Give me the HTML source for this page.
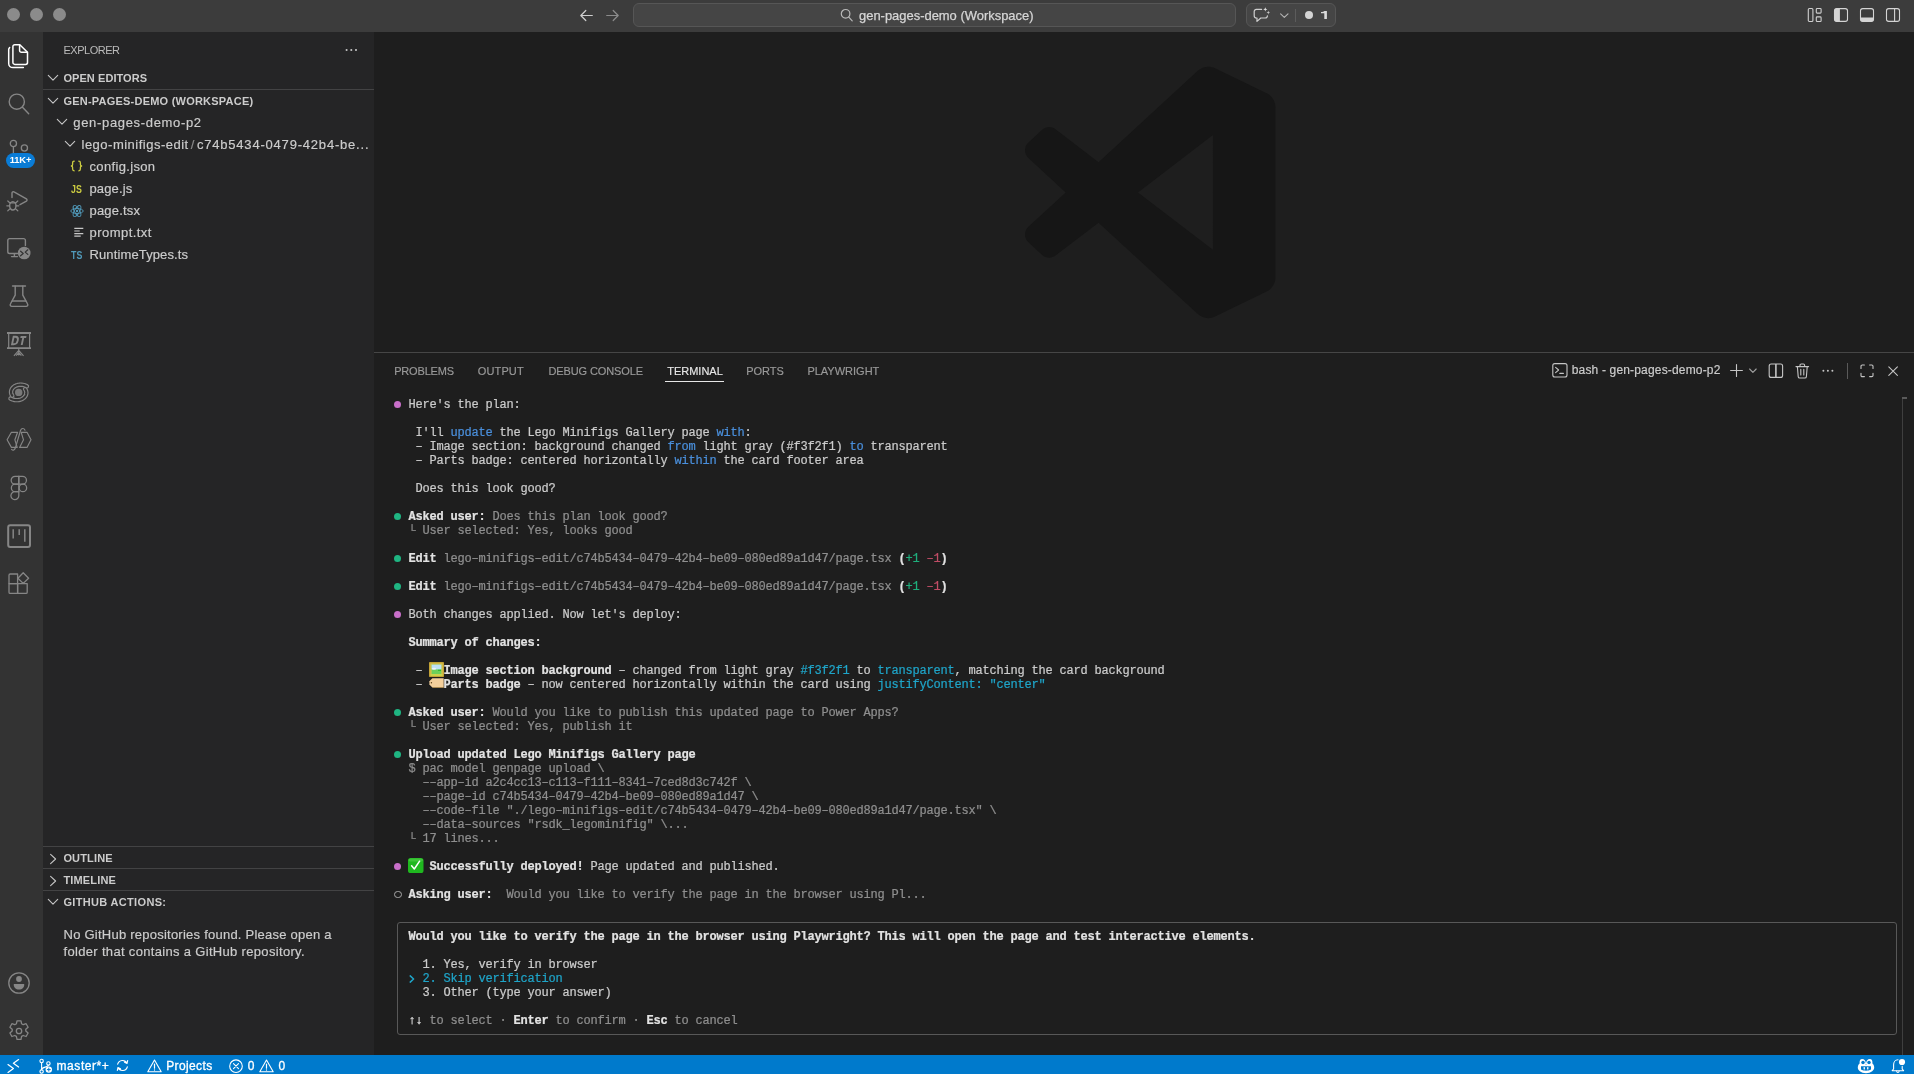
<!DOCTYPE html>
<html>
<head>
<meta charset="utf-8">
<title>gen-pages-demo (Workspace)</title>
<style>
*{box-sizing:border-box;margin:0;padding:0}
html,body{width:1914px;height:1074px;overflow:hidden;background:#1e1e1e}
body{font-family:"Liberation Sans",sans-serif;font-size:13px;color:#ccc;position:relative;will-change:transform}
.abs{position:absolute}
svg{display:block;overflow:visible}
/* title bar */
#titlebar{left:0;top:0;width:1914px;height:32px;background:#3c3c3c}
.tl{top:7.500px;width:13px;height:13px;border-radius:50%;background:#8b8b8b}
#cmd{left:633px;top:3px;width:603px;height:24px;border-radius:6px;background:#454545;border:1px solid #565656}
#cmdtxt{left:859px;top:8px;font-size:12.950px;color:#d6d6d6;white-space:nowrap;line-height:15px;-webkit-text-stroke:0.250px}
#chatbox{left:1246px;top:3px;width:90px;height:24px;border-radius:6px;background:#454545;border:1px solid #565656}
/* activity bar */
#activity{left:0;top:32px;width:43px;height:1023px;background:#333333}
/* sidebar */
#sidebar{left:43px;top:32px;width:331px;height:1023px;background:#252526}
.sechead{left:43px;width:331px;height:22px;font-size:11px;font-weight:bold;color:#cccccc;line-height:22px;padding-left:20.400px;white-space:nowrap}
.sep{left:43px;width:331px;height:1px;background:#434344}
.row{left:43px;width:331px;height:22px;line-height:22px;font-size:13px;color:#cccccc;white-space:nowrap;-webkit-text-stroke:0.180px}
/* editor */
#editor{left:374px;top:32px;width:1540px;height:320px;background:#1e1e1e}
/* panel */
#panel{left:374px;top:352px;width:1540px;height:703px;background:#1e1e1e;border-top:1px solid #464646}
.ptab{top:365px;font-size:11px;color:#9a9a9a;line-height:13px;white-space:nowrap;-webkit-text-stroke:0.150px}
/* terminal */
#term{left:394.400px;top:397.600px;font-family:"Liberation Mono",monospace;font-size:12px;letter-spacing:-0.200px;line-height:14px;color:#cccccc;white-space:pre;-webkit-text-stroke:0.220px}
#term .b{font-weight:bold;color:#e2e2e2}
#term .d{color:#8f8f8f}
#term .bl{color:#4a8fdc}
#term .cy{color:#1fa5c9}
#term .g{color:#1fae7c}
#term .r{color:#c04d66}
#term .em{display:inline-block;width:14px;letter-spacing:0}
/* status bar */
#status{left:0;top:1055px;width:1914px;height:19px;background:#007acc}
.stxt{top:1054.500px;height:22px;line-height:22px;font-size:12px;color:#fff;white-space:nowrap;-webkit-text-stroke:0.300px #fff}
</style>
</head>
<body>
<div id="titlebar" class="abs">
  <div class="abs tl" style="left:6.700px"></div>
  <div class="abs tl" style="left:29.700px"></div>
  <div class="abs tl" style="left:52.500px"></div>
  <!-- nav arrows -->
  <svg class="abs" style="left:580px;top:9px" width="13" height="13" viewBox="0 0 13 13" fill="none" stroke="#cfcfcf" stroke-width="1.2" stroke-linecap="round" stroke-linejoin="round"><path d="M12.3 6.5H1M5.8 1.5L0.8 6.5l5 5"/></svg>
  <svg class="abs" style="left:606px;top:9px" width="13" height="13" viewBox="0 0 13 13" fill="none" stroke="#8c8c8c" stroke-width="1.2" stroke-linecap="round" stroke-linejoin="round"><path d="M0.7 6.5H12M7.2 1.5l5 5-5 5"/></svg>
  <div id="cmd" class="abs"></div>
  <svg class="abs" style="left:840px;top:8px" width="14" height="14" viewBox="0 0 14 14" fill="none" stroke="#b9b9b9" stroke-width="1.2" stroke-linecap="round"><circle cx="5.6" cy="5.8" r="4.3"/><path d="M8.8 9.2l3.4 3.6"/></svg>
  <div id="cmdtxt" class="abs">gen-pages-demo (Workspace)</div>
  <div id="chatbox" class="abs"></div>
  <!-- chat sparkle icon -->
  <svg class="abs" style="left:1253px;top:7px" width="18" height="17" viewBox="0 0 18 17" fill="none" stroke="#cfcfcf" stroke-width="1.200" stroke-linecap="round" stroke-linejoin="round"><path d="M8.600 2.400H3.400C2.100 2.400 1.200 3.300 1.200 4.600v4.200c0 1.300.900 2.200 2.200 2.200H4v3.400l3.800-3.400h4.400c1.300 0 2.200-.900 2.200-2.200V8.800"/><path d="M12.300 0.300l.600 1.500 1.500.600-1.500.600-.600 1.500-.600-1.500-1.500-.600 1.500-.600z" fill="#dcdcdc" stroke="none"/><path d="M15.300 3.800l.500 1.300 1.300.500-1.300.500-.500 1.300-.500-1.300-1.300-.500 1.300-.500z" fill="#c4c4c4" stroke="none"/></svg>
  <svg class="abs" style="left:1279.800px;top:12.500px" width="9" height="6" viewBox="0 0 9 6" fill="none" stroke="#b4b4b4" stroke-width="1.100" stroke-linecap="round" stroke-linejoin="round"><path d="M0.600 0.800l3.700 3.600L8 0.800"/></svg>
  <div class="abs" style="left:1295px;top:8.500px;width:1px;height:13px;background:#5c5c5c"></div>
  <div class="abs" style="left:1304.600px;top:10.700px;width:8.700px;height:8.700px;border-radius:50%;background:#d4d4d4"></div>
  <svg class="abs" style="left:1320px;top:10px" width="8" height="10" viewBox="0 0 8 10"><path d="M1 3.200V1.900C2.600 1.800 3.700 1.500 4.400 0.900h2.500V9H4.300V3.200z" fill="#dadada"/></svg>
  <!-- layout controls -->
  <svg class="abs" style="left:1807px;top:7px" width="16" height="16" viewBox="0 0 16 16" fill="none" stroke="#cfcfcf" stroke-width="1.1"><rect x="1.3" y="1.5" width="4.6" height="13" rx="1"/><rect x="9.3" y="1.5" width="4.8" height="4.6" rx=".8"/><rect x="9.3" y="9.9" width="4.8" height="4.6" rx=".8"/></svg>
  <svg class="abs" style="left:1833px;top:7px" width="16" height="16" viewBox="0 0 16 16"><rect x="1.5" y="1.6" width="13" height="12.8" rx="2.2" fill="none" stroke="#d4d4d4" stroke-width="1.1"/><path d="M3.5 1.6h3.4v12.8H3.5a2 2 0 0 1-2-2V3.6a2 2 0 0 1 2-2z" fill="#d4d4d4"/></svg>
  <svg class="abs" style="left:1859px;top:7px" width="16" height="16" viewBox="0 0 16 16"><rect x="1.5" y="1.6" width="13" height="12.8" rx="2.2" fill="none" stroke="#d4d4d4" stroke-width="1.1"/><path d="M1.5 10.4h13v2a2 2 0 0 1-2 2h-9a2 2 0 0 1-2-2z" fill="#d4d4d4"/></svg>
  <svg class="abs" style="left:1885px;top:7px" width="16" height="16" viewBox="0 0 16 16" fill="none" stroke="#d4d4d4" stroke-width="1.1"><rect x="1.5" y="1.6" width="13" height="12.8" rx="2.2"/><path d="M9.6 1.6v12.8"/></svg>
</div>
<div id="activity" class="abs"></div>
<div id="acticons" class="abs" style="left:0;top:0">
  <!-- files (active) -->
  <svg class="abs" style="left:7px;top:42px" width="24" height="28" viewBox="0 0 24 28" fill="none" stroke="#ffffff" stroke-width="1.500" stroke-linejoin="round" stroke-linecap="round"><path d="M7.800 2.700h5l7.700 7.600v10.200a1.900 1.900 0 0 1-1.900 1.900H7.800a1.900 1.900 0 0 1-1.900-1.900V4.600a1.900 1.900 0 0 1 1.900-1.900z"/><path d="M12.600 2.900V8.400a1.800 1.800 0 0 0 1.800 1.800h5.900"/><path d="M2.600 5.600A2.600 2.600 0 0 0 1.700 7.600V21.400a4.200 4.200 0 0 0 4.200 4.200H16.400"/></svg>
  <!-- search -->
  <svg class="abs" style="left:6px;top:90px" width="26" height="26" viewBox="0 0 26 26" fill="none" stroke="#868686" stroke-width="1.4" stroke-linecap="round"><circle cx="10.800" cy="11.700" r="7.600"/><path d="M16.500 17.200l6.200 6.600"/></svg>
  <!-- source control -->
  <svg class="abs" style="left:6px;top:136px" width="28" height="20" viewBox="0 0 28 20" fill="none" stroke="#868686" stroke-width="1.3"><circle cx="7.400" cy="7.500" r="3.100"/><circle cx="18.400" cy="12" r="3.100"/><path d="M7.400 10.600V20"/></svg>
  <div class="abs" style="left:6px;top:152.500px;width:29px;height:15px;border-radius:8px;background:#0a7cd6;color:#fff;font-size:9.300px;font-weight:bold;line-height:15px;text-align:center;letter-spacing:-0.1px">11K+</div>
  <!-- run and debug -->
  <svg class="abs" style="left:5px;top:188px" width="26" height="26" viewBox="0 0 26 26" fill="none" stroke="#868686" stroke-width="1.4" stroke-linejoin="round" stroke-linecap="round"><path d="M7 9.500V5a1.300 1.300 0 0 1 2-1.100l12.400 7a1.300 1.300 0 0 1 0 2.200L15 16.600"/><ellipse cx="7.800" cy="17.800" rx="3.200" ry="4.200"/><path d="M5 14.800h5.600M4.600 17.800H1.800M11 17.800h2.800M5 15l-2.200-2M10.600 15l2.200-2M5.200 20.600l-2.400 2.200M10.400 20.600l2.400 2.200" stroke-width="1.200"/></svg>
  <!-- remote explorer -->
  <svg class="abs" style="left:5px;top:234px" width="28" height="28" viewBox="0 0 28 28" fill="none" stroke="#868686" stroke-width="1.400" stroke-linejoin="round" stroke-linecap="round"><path d="M12.500 19.500H4.600A1.800 1.800 0 0 1 2.800 17.700V6.400A1.800 1.800 0 0 1 4.600 4.600H18.600A1.800 1.800 0 0 1 20.400 6.400V11.500"/><path d="M6.500 22.600h6"/><path d="M9.400 19.800v2.600"/><circle cx="19.200" cy="19" r="6.300" fill="#868686" stroke="none"/><path d="M15.600 17.200l2.600 2.300-2.600 2.300M22.800 15.800l-2.600 2.300 2.600 2.300" stroke="#333" stroke-width="1.200"/></svg>
  <!-- testing flask -->
  <svg class="abs" style="left:6px;top:282px" width="26" height="28" viewBox="0 0 26 28" fill="none" stroke="#868686" stroke-width="1.400" stroke-linejoin="round" stroke-linecap="round"><path d="M6.500 4h13"/><path d="M9.200 4.200v9L4.400 22a1.600 1.600 0 0 0 1.400 2.400h14.400a1.600 1.600 0 0 0 1.400-2.400l-4.800-8.800v-9"/><path d="M6.200 19h13.600"/></svg>
  <!-- DT board -->
  <svg class="abs" style="left:5px;top:329px" width="28" height="30" viewBox="0 0 28 30" fill="none" stroke="#868686" stroke-width="1.200"><path d="M2 4h24M2 19.100h24" stroke-width="1.900"/><path d="M3.700 4v15M24.600 4v15"/><path d="M13.750 20v6.600M13.750 21.400l-4.800 5.400M13.750 21.400l4.800 5.400M13.750 23.600l-2.600 3M13.750 23.600l2.600 3" stroke-width="1.100"/><g transform="translate(2.400,0) skewX(-12)" stroke-width="1.900"><path d="M7.900 15.200V7.800h1.700c2.300 0 3.200 1.500 3.200 3.700s-.9 3.700-3.200 3.700z"/><path d="M14.800 8h5.800M17.700 8v8"/></g></svg>
  <!-- dataverse swirl -->
  <svg class="abs" style="left:6px;top:381px" width="26" height="24" viewBox="0 0 26 24" fill="none" stroke-linecap="round" stroke-linejoin="round"><g transform="translate(12.700,11.400)"><path d="M-8.24 6.09 L-7.23 6.61 L-6.18 7.03 L-5.12 7.35 L-4.05 7.58 L-2.98 7.71 L-1.93 7.75 L-0.90 7.71 L0.09 7.59 L1.05 7.39 L1.96 7.13 L2.81 6.79 L3.61 6.40 L4.34 5.96 L5.01 5.46 L5.61 4.93 L6.13 4.36 L6.58 3.75 L6.95 3.13 L7.25 2.48 L7.46 1.82 L7.60 1.16 L7.66 0.49 L7.64 -0.18 L7.54 -0.84 L7.37 -1.48 L7.12 -2.11 L6.80 -2.72 L6.41 -3.29" stroke="#868686" stroke-width="4.400"/><path d="M-8.24 6.09 L-7.23 6.61 L-6.18 7.03 L-5.12 7.35 L-4.05 7.58 L-2.98 7.71 L-1.93 7.75 L-0.90 7.71 L0.09 7.59 L1.05 7.39 L1.96 7.13 L2.81 6.79 L3.61 6.40 L4.34 5.96 L5.01 5.46 L5.61 4.93 L6.13 4.36 L6.58 3.75 L6.95 3.13 L7.25 2.48 L7.46 1.82 L7.60 1.16 L7.66 0.49 L7.64 -0.18 L7.54 -0.84 L7.37 -1.48 L7.12 -2.11 L6.80 -2.72 L6.41 -3.29" stroke="#333333" stroke-width="2.100"/><path d="M8.24 -6.09 L7.23 -6.61 L6.18 -7.03 L5.12 -7.35 L4.05 -7.58 L2.98 -7.71 L1.93 -7.75 L0.90 -7.71 L-0.09 -7.59 L-1.05 -7.39 L-1.96 -7.13 L-2.81 -6.79 L-3.61 -6.40 L-4.34 -5.96 L-5.01 -5.46 L-5.61 -4.93 L-6.13 -4.36 L-6.58 -3.75 L-6.95 -3.13 L-7.25 -2.48 L-7.46 -1.82 L-7.60 -1.16 L-7.66 -0.49 L-7.64 0.18 L-7.54 0.84 L-7.37 1.48 L-7.12 2.11 L-6.80 2.72 L-6.41 3.29" stroke="#868686" stroke-width="4.400"/><path d="M8.24 -6.09 L7.23 -6.61 L6.18 -7.03 L5.12 -7.35 L4.05 -7.58 L2.98 -7.71 L1.93 -7.75 L0.90 -7.71 L-0.09 -7.59 L-1.05 -7.39 L-1.96 -7.13 L-2.81 -6.79 L-3.61 -6.40 L-4.34 -5.96 L-5.01 -5.46 L-5.61 -4.93 L-6.13 -4.36 L-6.58 -3.75 L-6.95 -3.13 L-7.25 -2.48 L-7.46 -1.82 L-7.60 -1.16 L-7.66 -0.49 L-7.64 0.18 L-7.54 0.84 L-7.37 1.48 L-7.12 2.11 L-6.80 2.72 L-6.41 3.29" stroke="#333333" stroke-width="2.100"/><circle cx="0" cy="0" r="3.700" fill="#868686" opacity=".85"/></g></svg>
  <!-- power platform -->
  <svg class="abs" style="left:5px;top:426px" width="28" height="28" viewBox="0 0 28 28" fill="none" stroke="#868686" stroke-width="1.150" stroke-linejoin="round" stroke-linecap="round"><path d="M6.400 6.300h6.200L9.900 13.800l2.300 7.600H6.400L2.100 13.800z"/><path d="M16.200 6.300H22l4 7.500-4 7.600h-7.400l3.900-7.600z"/><path d="M20 4.200C19 2 16.500 1.800 15.500 4.500L10.500 21.500C9.800 24 8 24.800 6.600 23.400"/></svg>
  <!-- figma-like -->
  <svg class="abs" style="left:9px;top:474px" width="20" height="28" viewBox="0 0 20 28" fill="none" stroke="#868686" stroke-width="1.250"><path d="M9.800 2.300H6.100a3.950 3.950 0 0 0 0 7.900h3.700z"/><path d="M9.800 2.300h3.700a3.950 3.950 0 0 1 0 7.900H9.800z"/><path d="M9.800 10.200H6.100a3.750 3.750 0 0 0 0 7.500h3.700z"/><circle cx="13.900" cy="13.950" r="3.750"/><path d="M9.800 17.700H6.100a3.950 3.950 0 1 0 3.700 3.950z"/></svg>
  <!-- kanban -->
  <svg class="abs" style="left:6px;top:523px" width="26" height="26" viewBox="0 0 26 26" fill="none" stroke="#868686"><rect x="2.200" y="2.200" width="21.800" height="21.800" rx="2" stroke-width="2"/><path d="M7.200 6.200v9.400M13.200 6.200v5.800M18.800 6.200v12.600" stroke-width="1.500"/></svg>
  <!-- extensions -->
  <svg class="abs" style="left:6px;top:570px" width="26" height="26" viewBox="0 0 26 26" fill="none" stroke="#868686" stroke-width="1.300" stroke-linejoin="round"><path d="M3 5.200a1.200 1.200 0 0 1 1.200-1.200h7.400v9.600H3z"/><path d="M3 13.600h8.600v9.800H4.200A1.200 1.200 0 0 1 3 22.200z"/><path d="M11.600 13.600h9.600v8.600a1.200 1.200 0 0 1-1.200 1.200h-8.400z"/><path d="M17.200 2.800l5.400 5.400-5.400 5.200-5.300-5.200z"/></svg>
  <!-- account -->
  <svg class="abs" style="left:7px;top:971px" width="24" height="24" viewBox="0 0 24 24" fill="none" stroke="#868686" stroke-width="1.300"><circle cx="12" cy="12" r="10.200"/><circle cx="12" cy="8" r="2.900" fill="#868686" stroke="none"/><path d="M6.800 13h10.400c.4 3.400-2 5.600-5.200 5.600S6.400 16.400 6.800 13z" fill="#868686" stroke="none"/></svg>
  <!-- gear -->
  <svg class="abs" style="left:7px;top:1019px" width="24" height="24" viewBox="0 0 24 24" fill="none" stroke="#868686" stroke-width="1.300" stroke-linejoin="round"><path d="M10 1.800h4l.6 3 1.600.9 2.900-1 2 3.500-2.300 2v1.800l2.300 2-2 3.500-2.900-1-1.600.9-.6 3h-4l-.6-3-1.600-.9-2.900 1-2-3.500 2.300-2v-1.800l-2.300-2 2-3.500 2.900 1 1.600-.9z"/><circle cx="12" cy="12" r="2.700"/></svg>
</div>
<div id="sidebar" class="abs"></div>
<div id="sidecontent" class="abs" style="left:0;top:0">
  <div class="abs" style="left:63.500px;top:39px;height:22px;line-height:22px;font-size:11px;color:#bbbbbb;letter-spacing:-0.500px;white-space:nowrap">EXPLORER</div>
  <svg class="abs" style="left:345px;top:48px" width="13" height="4" viewBox="0 0 13 4" fill="#c5c5c5"><circle cx="1.600" cy="2" r="1.050"/><circle cx="6.300" cy="2" r="1.050"/><circle cx="11" cy="2" r="1.050"/></svg>
  <svg class="abs" style="left:48px;top:75px" width="10" height="6" viewBox="0 0 10 6" fill="none" stroke="#c5c5c5" stroke-width="1.100" stroke-linecap="round" stroke-linejoin="round"><path d="M0.300 0.400L5 5.200 9.700 0.400"/></svg>
  <div class="abs sechead" style="top:67px;letter-spacing:0.070px">OPEN EDITORS</div>
  <div class="abs sep" style="top:89px"></div>
  <svg class="abs" style="left:48px;top:98px" width="10" height="6" viewBox="0 0 10 6" fill="none" stroke="#c5c5c5" stroke-width="1.100" stroke-linecap="round" stroke-linejoin="round"><path d="M0.300 0.400L5 5.200 9.700 0.400"/></svg>
  <div class="abs sechead" style="top:90px;letter-spacing:0.225px">GEN-PAGES-DEMO (WORKSPACE)</div>
  <svg class="abs" style="left:57px;top:119px" width="10" height="6" viewBox="0 0 10 6" fill="none" stroke="#c5c5c5" stroke-width="1.100" stroke-linecap="round" stroke-linejoin="round"><path d="M0.300 0.400L5 5.200 9.700 0.400"/></svg>
  <div class="abs row" style="top:112px;padding-left:30.300px;letter-spacing:0.670px">gen-pages-demo-p2</div>
  <svg class="abs" style="left:65.2px;top:141px" width="10" height="6" viewBox="0 0 10 6" fill="none" stroke="#c5c5c5" stroke-width="1.100" stroke-linecap="round" stroke-linejoin="round"><path d="M0.300 0.400L5 5.200 9.700 0.400"/></svg>
  <div class="abs row" style="top:134px;padding-left:38.500px"><span style="letter-spacing:0.496px">lego-minifigs-edit</span><span style="color:#8b8b8b;margin:0 2.600px 0 2px">/</span><span style="letter-spacing:0.800px">c74b5434-0479-42b4-be...</span></div>
  <!-- config.json -->
  <svg class="abs" style="left:70px;top:160px" width="13" height="12" viewBox="0 0 13 12" fill="none" stroke="#cbcb41" stroke-width="1.300" stroke-linecap="round" stroke-linejoin="round"><path d="M4.200 1.200c-1.400 0-1.600.600-1.600 1.700v1.600c0 .800-.400 1.300-1.200 1.500.800.200 1.200.700 1.200 1.500v1.600c0 1.100.200 1.700 1.600 1.700"/><path d="M8.800 1.200c1.400 0 1.600.600 1.600 1.700v1.600c0 .800.400 1.300 1.200 1.500-.800.200-1.200.700-1.200 1.500v1.600c0 1.100-.200 1.700-1.600 1.700"/></svg>
  <div class="abs row" style="top:156px;padding-left:46.500px;letter-spacing:0.340px">config.json</div>
  <!-- page.js -->
  <div class="abs" style="left:70.500px;top:177.500px;height:22px;line-height:22px;font-size:11px;font-weight:bold;color:#cbcb41;transform:scaleX(0.800);transform-origin:0 50%">JS</div>
  <div class="abs row" style="top:178px;padding-left:46.500px;letter-spacing:0.125px">page.js</div>
  <!-- page.tsx -->
  <svg class="abs" style="left:70px;top:203.500px" width="14" height="14" viewBox="0 0 14 14" fill="none" stroke="#519aba" stroke-width="0.900"><ellipse cx="7" cy="7" rx="6.200" ry="2.500"/><ellipse cx="7" cy="7" rx="6.200" ry="2.500" transform="rotate(60 7 7)"/><ellipse cx="7" cy="7" rx="6.200" ry="2.500" transform="rotate(120 7 7)"/><circle cx="7" cy="7" r="1.200" fill="#519aba" stroke="none"/></svg>
  <div class="abs row" style="top:200px;padding-left:46.500px;letter-spacing:0.193px">page.tsx</div>
  <!-- prompt.txt -->
  <svg class="abs" style="left:74px;top:227px" width="10" height="11" viewBox="0 0 10 11" fill="none" stroke="#c8c8c8" stroke-width="1.200"><path d="M0.300 1.400h9M0.300 4h5.400M0.300 6.600h9M0.300 9.200h6.400"/></svg>
  <div class="abs row" style="top:222px;padding-left:46.500px;letter-spacing:0.460px">prompt.txt</div>
  <!-- RuntimeTypes.ts -->
  <div class="abs" style="left:70.500px;top:243.500px;height:22px;line-height:22px;font-size:11px;font-weight:bold;color:#519aba;transform:scaleX(0.800);transform-origin:0 50%">TS</div>
  <div class="abs row" style="top:244px;padding-left:46.500px;letter-spacing:0.125px">RuntimeTypes.ts</div>
  <!-- bottom sections -->
  <div class="abs sep" style="top:846px"></div>
  <svg class="abs" style="left:50px;top:853.5px" width="7" height="10" viewBox="0 0 7 10" fill="none" stroke="#c5c5c5" stroke-width="1.100" stroke-linecap="round" stroke-linejoin="round"><path d="M0.600 0.300L5.600 5 0.600 9.700"/></svg>
  <div class="abs sechead" style="top:847px;letter-spacing:0.160px">OUTLINE</div>
  <div class="abs sep" style="top:868px"></div>
  <svg class="abs" style="left:50px;top:875.5px" width="7" height="10" viewBox="0 0 7 10" fill="none" stroke="#c5c5c5" stroke-width="1.100" stroke-linecap="round" stroke-linejoin="round"><path d="M0.600 0.300L5.600 5 0.600 9.700"/></svg>
  <div class="abs sechead" style="top:869px;letter-spacing:0.170px">TIMELINE</div>
  <div class="abs sep" style="top:890px"></div>
  <svg class="abs" style="left:48px;top:899px" width="10" height="6" viewBox="0 0 10 6" fill="none" stroke="#c5c5c5" stroke-width="1.100" stroke-linecap="round" stroke-linejoin="round"><path d="M0.300 0.400L5 5.200 9.700 0.400"/></svg>
  <div class="abs sechead" style="top:891px;letter-spacing:0.330px">GITHUB ACTIONS:</div>
  <div class="abs" style="left:63.500px;top:925.500px;font-size:13px;line-height:17.700px;color:#cccccc;white-space:nowrap;-webkit-text-stroke:0.180px"><span style="letter-spacing:0.240px">No GitHub repositories found. Please open a</span><br><span style="letter-spacing:0.324px">folder that contains a GitHub repository.</span></div>
</div>
<div id="editor" class="abs"></div>
<svg class="abs" style="left:1024.500px;top:65.600px" width="250.500" height="252.800" viewBox="0 0 100 100" preserveAspectRatio="none"><path fill="#161616" fill-rule="evenodd" clip-rule="evenodd" d="M70.9119 99.3171C72.4869 99.9307 74.2828 99.8914 75.8725 99.1264L96.4608 89.2197C98.6242 88.1787 100 85.9892 100 83.5872V16.4133C100 14.0113 98.6243 11.8218 96.4609 10.7808L75.8725 0.873756C73.7862 -0.130129 71.3446 0.11576 69.5135 1.44695C69.252 1.63711 69.0028 1.84943 68.769 2.08341L29.3551 38.0415L12.1872 25.0096C10.589 23.7965 8.35363 23.8959 6.86933 25.2461L1.36303 30.2549C-0.452552 31.9064 -0.454633 34.7627 1.35853 36.417L16.2471 50.0001L1.35853 63.5832C-0.454633 65.2374 -0.452552 68.0938 1.36303 69.7453L6.86933 74.7541C8.35363 76.1043 10.589 76.2037 12.1872 74.9905L29.3551 61.9587L68.769 97.9167C69.3925 98.5406 70.1246 99.0104 70.9119 99.3171ZM75.0152 27.2989L45.1091 50.0001L75.0152 72.7012V27.2989Z"/></svg>
<div id="panel" class="abs"></div>
<div id="panelcontent" class="abs" style="left:0;top:0">
  <div class="abs ptab" style="left:394.200px;letter-spacing:-0.180px">PROBLEMS</div>
  <div class="abs ptab" style="left:477.800px;letter-spacing:0.128px">OUTPUT</div>
  <div class="abs ptab" style="left:548.500px;letter-spacing:-0.121px">DEBUG CONSOLE</div>
  <div class="abs ptab" style="left:667.200px;color:#e7e7e7">TERMINAL</div>
  <div class="abs" style="left:665.300px;top:381px;width:59.200px;height:1px;background:#e7e7e7"></div>
  <div class="abs ptab" style="left:746.200px">PORTS</div>
  <div class="abs ptab" style="left:807.400px">PLAYWRIGHT</div>
  <!-- right actions -->
  <svg class="abs" style="left:1552px;top:363px" width="16" height="15" viewBox="0 0 16 15" fill="none" stroke="#c5c5c5" stroke-width="1.100" stroke-linecap="round" stroke-linejoin="round"><rect x="0.800" y="0.600" width="14.200" height="13.400" rx="2"/><path d="M3.600 4.400l3 2.600-3 2.600M7.800 10.400h3.600"/></svg>
  <div class="abs" style="left:1571.700px;top:363px;font-size:12px;line-height:15px;color:#cccccc;white-space:nowrap;letter-spacing:0.170px;-webkit-text-stroke:0.180px">bash - gen-pages-demo-p2</div>
  <svg class="abs" style="left:1730px;top:364px" width="13" height="13" viewBox="0 0 13 13" fill="none" stroke="#c5c5c5" stroke-width="1.100" stroke-linecap="round"><path d="M6.500 0.600v11.800M0.600 6.500h11.800"/></svg>
  <svg class="abs" style="left:1749px;top:368px" width="8" height="6" viewBox="0 0 8 6" fill="none" stroke="#a0a0a0" stroke-width="1.100" stroke-linecap="round" stroke-linejoin="round"><path d="M0.600 1l3.300 3.400L7.200 1"/></svg>
  <svg class="abs" style="left:1768px;top:363px" width="16" height="16" viewBox="0 0 16 16" fill="none" stroke="#c5c5c5" stroke-width="1.100"><rect x="1.200" y="1" width="13.400" height="13.400" rx="2"/><path d="M7.900 1v13.400" stroke-width="1.600"/></svg>
  <svg class="abs" style="left:1795px;top:362.500px" width="15" height="16" viewBox="0 0 15 16" fill="none" stroke="#c5c5c5" stroke-width="1.100" stroke-linecap="round" stroke-linejoin="round"><path d="M1 3.600h12.600"/><path d="M5 3.400V2.200c0-.800.500-1.200 1.200-1.200h2.200c.700 0 1.200.400 1.200 1.200v1.200"/><path d="M2.400 3.800l.800 9.800c.1.900.6 1.400 1.500 1.400h5.200c.9 0 1.400-.5 1.500-1.400l.800-9.800"/><path d="M5.800 6.400v5.600M8.800 6.400v5.600"/></svg>
  <svg class="abs" style="left:1822px;top:369px" width="12" height="4" viewBox="0 0 12 4" fill="#c5c5c5"><circle cx="1.400" cy="1.800" r="1"/><circle cx="5.900" cy="1.800" r="1"/><circle cx="10.400" cy="1.800" r="1"/></svg>
  <div class="abs" style="left:1847px;top:363px;width:1px;height:16px;background:#5a5a5a"></div>
  <svg class="abs" style="left:1860px;top:363.500px" width="14" height="14" viewBox="0 0 14 14" fill="none" stroke="#c5c5c5" stroke-width="1.100" stroke-linecap="round" stroke-linejoin="round"><path d="M1 4.400V2.200c0-.700.500-1.200 1.200-1.200h2.200M9.600 1h2.200c.700 0 1.200.500 1.200 1.200v2.200M13 9.200v2.200c0 .700-.500 1.200-1.200 1.200H9.600M4.400 12.600H2.200c-.700 0-1.200-.500-1.200-1.200V9.200"/></svg>
  <svg class="abs" style="left:1888px;top:365.500px" width="10" height="10" viewBox="0 0 10 10" fill="none" stroke="#c5c5c5" stroke-width="1.100" stroke-linecap="round"><path d="M0.800 0.800l8.600 8.600M9.400 0.800L0.800 9.400"/></svg>
  <div class="abs" style="left:1902px;top:397px;width:1px;height:658px;background:#3f3f3f"></div>
  <div class="abs" style="left:1902px;top:397px;width:5px;height:2px;background:#5a5a5a"></div>
  <div id="term" class="abs">  Here's the plan:

   I'll <span class="bl">update</span> the Lego Minifigs Gallery page <span class="bl">with</span>:
   – Image section: background changed <span class="bl">from</span> light gray (#f3f2f1) <span class="bl">to</span> transparent
   – Parts badge: centered horizontally <span class="bl">within</span> the card footer area

   Does this look good?

  <span class="b">Asked user:</span> <span class="d">Does this plan look good?</span>
  <span class="d">└ User selected: Yes, looks good</span>

  <span class="b">Edit</span> <span class="d">lego–minifigs–edit/c74b5434–0479–42b4–be09–080ed89a1d47/page.tsx</span> <span class="b">(</span><span class="g">+1</span> <span class="r">–1</span><span class="b">)</span>

  <span class="b">Edit</span> <span class="d">lego–minifigs–edit/c74b5434–0479–42b4–be09–080ed89a1d47/page.tsx</span> <span class="b">(</span><span class="g">+1</span> <span class="r">–1</span><span class="b">)</span>

  Both changes applied. Now let's deploy:

  <span class="b">Summary of changes:</span>

   – <span class="em"></span><span class="b">Image section background</span> – changed from light gray <span class="cy">#f3f2f1</span> to <span class="cy">transparent</span>, matching the card background
   – <span class="em"></span><span class="b">Parts badge</span> – now centered horizontally within the card using <span class="cy">justifyContent: "center"</span>

  <span class="b">Asked user:</span> <span class="d">Would you like to publish this updated page to Power Apps?</span>
  <span class="d">└ User selected: Yes, publish it</span>

  <span class="b">Upload updated Lego Minifigs Gallery page</span>
  <span class="d">$ pac model genpage upload \</span>
  <span class="d">  ––app–id a2c4cc13–c113–f111–8341–7ced8d3c742f \</span>
  <span class="d">  ––page–id c74b5434–0479–42b4–be09–080ed89a1d47 \</span>
  <span class="d">  ––code–file "./lego–minifigs–edit/c74b5434–0479–42b4–be09–080ed89a1d47/page.tsx" \</span>
  <span class="d">  ––data–sources "rsdk_legominifig" \...</span>
  <span class="d">└ 17 lines...</span>

  <span class="em"></span> <span class="b">Successfully deployed!</span> Page updated and published.

  <span class="b">Asking user:</span>  <span class="d">Would you like to verify the page in the browser using Pl...</span>


  <span class="b">Would you like to verify the page in the browser using Playwright? This will open the page and test interactive elements.</span>

    1. Yes, verify in browser
    <span class="cy">2. Skip verification</span>
    3. Other (type your answer)

  <span class="b">↑↓</span><span class="d"> to select · </span><span class="b">Enter</span><span class="d"> to confirm · </span><span class="b">Esc</span><span class="d"> to cancel</span></div>
  <div class="abs" style="left:394.300px;top:401.200px;width:7.200px;height:7.200px;border-radius:50%;background:#c86fc9"></div><div class="abs" style="left:394.300px;top:513.200px;width:7.200px;height:7.200px;border-radius:50%;background:#1fb582"></div><div class="abs" style="left:394.300px;top:555.200px;width:7.200px;height:7.200px;border-radius:50%;background:#1fb582"></div><div class="abs" style="left:394.300px;top:583.200px;width:7.200px;height:7.200px;border-radius:50%;background:#1fb582"></div><div class="abs" style="left:394.300px;top:611.200px;width:7.200px;height:7.200px;border-radius:50%;background:#c86fc9"></div><div class="abs" style="left:394.300px;top:709.200px;width:7.200px;height:7.200px;border-radius:50%;background:#1fb582"></div><div class="abs" style="left:394.300px;top:751.200px;width:7.200px;height:7.200px;border-radius:50%;background:#1fb582"></div><div class="abs" style="left:394.300px;top:863.200px;width:7.200px;height:7.200px;border-radius:50%;background:#c86fc9"></div><div class="abs" style="left:394.200px;top:891.100px;width:7.400px;height:7.400px;border-radius:50%;border:1.200px solid #a8a8a8"></div><svg class="abs" style="left:408.800px;top:974.800px" width="6" height="8" viewBox="0 0 6 8" fill="none" stroke="#1fa5c9" stroke-width="1.500" stroke-linecap="round" stroke-linejoin="round"><path d="M1.200 0.900L4.600 4 1.200 7.100"/></svg><svg class="abs" style="left:429.200px;top:662px" width="15" height="15" viewBox="0 0 15 15"><rect x="0" y="0" width="15" height="15" rx="0.800" fill="#c2a236"/><rect x="1.300" y="1.300" width="12.400" height="12.400" fill="#d9c24a"/><rect x="2.600" y="2.600" width="9.800" height="9.400" fill="#6dcf5a"/><rect x="2.600" y="2.600" width="9.800" height="4.800" fill="#bfe0f5"/><ellipse cx="5" cy="6.800" rx="2.200" ry="1" fill="#eef3f7"/><rect x="9" y="7.800" width="3" height="0.900" fill="#1fae1f"/><rect x="1.600" y="12.300" width="11.800" height="1.500" fill="#c8d84e"/></svg><svg class="abs" style="left:429px;top:677.800px" width="15" height="10" viewBox="0 0 15 10"><path d="M3.400 0.300H14.700V9.500H3.400L0.400 6.600V3.200z" fill="#f4cf9b"/><path d="M3.400 9.500H14.700V10H3.700z" fill="#c79a45"/><circle cx="2.400" cy="4.800" r="0.700" fill="#5a4016"/></svg><svg class="abs" style="left:408.200px;top:858.300px" width="15.500" height="15" viewBox="0 0 15.500 15"><rect x="0" y="0" width="15.500" height="15" rx="2.600" fill="#1fb81f"/><rect x="0.500" y="0.400" width="14.500" height="3" rx="2" fill="#4ccb45" opacity=".7"/><path d="M3.600 7.800L6.300 11 11.600 3.200" fill="none" stroke="#fff" stroke-width="1.500" stroke-linecap="round" stroke-linejoin="round"/></svg><div class="abs" style="left:396.700px;top:921.700px;width:1500.300px;height:113.300px;border:1px solid #585858;border-radius:3px"></div>
</div>
<div id="status" class="abs"></div>
<div id="statuscontent" class="abs" style="left:0;top:0;color:#fff">
  <!-- remote -->
  <svg class="abs" style="left:7px;top:1059px" width="13" height="14" viewBox="0 0 13 14" fill="none" stroke="#ffffff" stroke-width="1.250" stroke-linecap="round" stroke-linejoin="round"><path d="M1 5.600L6.400 9.600 1 13.400"/><path d="M11.600 0.600L6.400 4.300 11.600 8"/></svg>
  <!-- branch -->
  <svg class="abs" style="left:38px;top:1058px" width="16" height="16" viewBox="0 0 16 16" fill="none" stroke="#ffffff" stroke-width="1.100"><circle cx="3.600" cy="3" r="1.700"/><circle cx="3.600" cy="13.600" r="1.700"/><path d="M3.600 4.700v7.200"/><circle cx="10.400" cy="5.400" r="1.700"/><path d="M10.400 7.100c0 2.400-6.800 1.600-6.800 4.400"/><circle cx="10.800" cy="11.600" r="3.200" fill="#ffffff" stroke="none"/><path d="M10.800 9.700v3.800M8.900 11.600h3.800" stroke="#007acc" stroke-width="1"/></svg>
  <div class="abs stxt" style="left:56.500px;letter-spacing:0.570px">master*+</div>
  <!-- sync -->
  <svg class="abs" style="left:116.300px;top:1059.200px" width="13" height="13" viewBox="0 0 13 13" fill="none" stroke="#ffffff" stroke-width="1.150" stroke-linecap="round" stroke-linejoin="round"><path d="M1.67 5.21A5.0 5.0 0 0 1 11.03 4.39M11.03 4.39l0.63 -2.73M11.03 4.39l-2.49 -1.27M11.33 7.79A5.0 5.0 0 0 1 1.97 8.61M1.97 8.61l-0.63 2.73M1.97 8.61l2.49 1.27"/></svg>
  <!-- warning + Projects -->
  <svg class="abs" style="left:147px;top:1058.500px" width="15" height="14" viewBox="0 0 15 14" fill="none" stroke="#ffffff" stroke-width="1.100" stroke-linejoin="round" stroke-linecap="round"><path d="M7.500 1L14.200 12.800H0.800z"/><path d="M7.500 5v4.200M7.500 10.800v.300" stroke-width="1.200"/></svg>
  <div class="abs stxt" style="left:166.200px;letter-spacing:0.370px">Projects</div>
  <!-- errors / warnings -->
  <svg class="abs" style="left:229px;top:1058.500px" width="15" height="15" viewBox="0 0 15 15" fill="none" stroke="#ffffff" stroke-width="1.100" stroke-linecap="round"><circle cx="7" cy="7.200" r="6.300"/><path d="M4.500 4.700l5 5M9.500 4.700l-5 5"/></svg>
  <div class="abs stxt" style="left:247.700px">0</div>
  <svg class="abs" style="left:259px;top:1058.500px" width="15" height="14" viewBox="0 0 15 14" fill="none" stroke="#ffffff" stroke-width="1.100" stroke-linejoin="round" stroke-linecap="round"><path d="M7.500 1L14.200 12.800H0.800z"/><path d="M7.500 5v4.200M7.500 10.800v.300" stroke-width="1.200"/></svg>
  <div class="abs stxt" style="left:278.400px">0</div>
  <!-- copilot -->
  <svg class="abs" style="left:1857px;top:1058px" width="18" height="16" viewBox="0 0 18 16"><path d="M9 5.400C8.600 2.800 7.400 1 5.200 1 3 1 2.400 3 2.600 5.400 1.400 6.400.800 7.800.800 9.600c0 1.600.600 2.600 2 3.600C4.400 14.400 6.600 15.200 9 15.200s4.600-.800 6.200-2c1.400-1 2-2 2-3.600 0-1.800-.600-3.200-1.800-4.200C15.600 3 15 1 12.800 1 10.600 1 9.400 2.800 9 5.400z" fill="#ffffff"/><circle cx="6" cy="4.600" r="1.750" fill="#007acc"/><circle cx="12" cy="4.600" r="1.750" fill="#007acc"/><path d="M4 8.200h10v3.400c-1.400.800-3.200 1.200-5 1.200s-3.600-.400-5-1.200z" fill="#007acc"/><rect x="6.600" y="9" width="1.300" height="2.600" rx=".600" fill="#ffffff"/><rect x="10.100" y="9" width="1.300" height="2.600" rx=".600" fill="#ffffff"/><path d="M8.400 6.200h1.200l-.600 1z" fill="#007acc"/></svg>
  <!-- bell -->
  <svg class="abs" style="left:1891px;top:1058px" width="16" height="16" viewBox="0 0 16 16" fill="none" stroke="#ffffff" stroke-width="1.100" stroke-linejoin="round" stroke-linecap="round"><path d="M7 1.800C4.400 1.800 2.600 4 2.600 6.800v4.200L1.200 12.700h11.400L11.200 11V8.400"/><path d="M5.600 13c.200 1 .700 1.500 1.300 1.500s1.100-.5 1.300-1.500"/><circle cx="11" cy="4" r="3.100" fill="#ffffff" stroke="none"/></svg>
</div>
</body>
</html>
